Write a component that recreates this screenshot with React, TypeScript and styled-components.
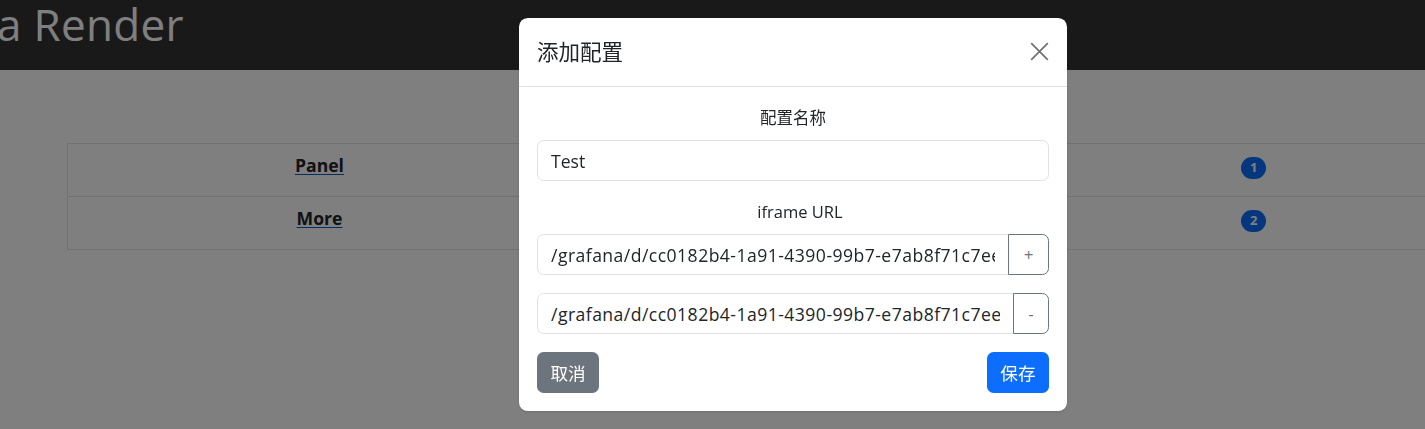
import React from "react"
import styled, { createGlobalStyle } from "styled-components"

const GlobalStyle = createGlobalStyle`
	html, body {
		margin: 0;
		padding: 0;
		background: #ffffff;
		overflow: hidden;
	}
	body {
		font-family: "Open Sans", "Noto Sans CJK SC", sans-serif;
		font-size: 17.6px;
		line-height: 1.5;
		color: #212529;
	}
	* {
		box-sizing: border-box;
	}
`

const Page = styled.div`
	width: 1425px;
	height: 429px;
	overflow: hidden;
`

const TopBar = styled.header`
	height: 70px;
	background: #333333;
	display: flex;
	align-items: flex-start;
	overflow: hidden;
`

const BrandTitle = styled.h1`
	margin: 0 0 0 -3px;
	font-size: 44px;
	font-weight: 400;
	line-height: 1.1;
	color: #ffffff;
	white-space: nowrap;
	letter-spacing: 0.3px;
`

const Content = styled.main`
	padding: 73px 0 0 67px;
`

const Table = styled.table`
	border-collapse: collapse;
	table-layout: fixed;
	width: 1438px;
`

const Cell = styled.td<{ $width: number }>`
	width: ${(p) => p.$width}px;
	height: 53px;
	border: 1px solid #dee2e6;
	border-right: none;
	text-align: center;
	vertical-align: top;
	padding: 8px 0 0;
`

const PanelLink = styled.a`
	font-weight: 700;
	color: #212529;
	text-decoration: underline;
	text-decoration-color: #0a58ca;
	text-underline-offset: 2px;
`

const Badge = styled.span`
	display: inline-flex;
	align-items: center;
	justify-content: center;
	min-width: 25px;
	height: 22px;
	margin-top: 2px;
	padding: 0 7px;
	border-radius: 12px;
	background: #0d6efd;
	color: #ffffff;
	font-size: 13px;
	font-weight: 700;
`

const Backdrop = styled.div`
	position: fixed;
	inset: 0;
	background: rgba(0, 0, 0, 0.5);
`

const Dialog = styled.div`
	position: fixed;
	left: 519px;
	top: 18px;
	width: 548px;
	background: #ffffff;
	border-radius: 8.8px;
	box-shadow: 0 1px 3px rgba(0, 0, 0, 0.15);
	display: flex;
	flex-direction: column;
`

const DialogHeader = styled.div`
	height: 69px;
	display: flex;
	align-items: center;
	justify-content: space-between;
	padding: 0 15px 0 18px;
	border-bottom: 1px solid #dee2e6;
`

const DialogTitle = styled.h5`
	margin: -2px 0 0;
	font-family: "Noto Sans CJK SC", sans-serif;
	font-size: 21.5px;
	font-weight: 400;
	color: #212529;
	line-height: 1.5;
`

const CloseButton = styled.button`
	width: 26px;
	height: 26px;
	padding: 0;
	border: none;
	background: transparent;
	display: flex;
	align-items: center;
	justify-content: center;
	opacity: 0.55;
	cursor: pointer;
	margin-top: -2px;
`

const DialogBody = styled.div`
	padding: 18px;
	display: flex;
	flex-direction: column;
`

const FieldLabel = styled.label<{ $gap?: number; $shift?: number }>`
	display: block;
	text-align: center;
	font-family: "Open Sans", "Noto Sans CJK SC", sans-serif;
	font-size: 16.5px;
	line-height: 26px;
	margin-top: ${(p) => p.$gap ?? 0}px;
	margin-bottom: 9px;
	padding-left: ${(p) => p.$shift ?? 0}px;
	color: #212529;
`

const TextInput = styled.input`
	display: block;
	width: 100%;
	height: 41px;
	padding: 0 13px;
	font-family: "Open Sans", sans-serif;
	font-size: 17.6px;
	color: #212529;
	border: 1px solid #dee2e6;
	border-radius: 6.6px;
	background: #ffffff;
	outline: none;
`

const InputGroup = styled.div`
	display: flex;
	height: 41px;
	margin-bottom: 18px;
`

const GroupInput = styled(TextInput)`
	flex: 1;
	min-width: 0;
	border-top-right-radius: 0;
	border-bottom-right-radius: 0;
	letter-spacing: 0.45px;
`

const GroupButton = styled.button<{ $width: number }>`
	width: ${(p) => p.$width}px;
	height: 41px;
	flex-shrink: 0;
	border: 1px solid #6c757d;
	border-radius: 0 6.6px 6.6px 0;
	background: #ffffff;
	color: #6c757d;
	font-family: "Open Sans", sans-serif;
	font-size: 17px;
	padding: 0;
	margin-left: -1px;
`

const Actions = styled.div`
	display: flex;
	justify-content: space-between;
`

const ActionButton = styled.button<{ $variant: "secondary" | "primary" }>`
	height: 41px;
	padding: 0 13.5px;
	border: none;
	border-radius: 6.6px;
	font-family: "Noto Sans CJK SC", sans-serif;
	font-size: 17.6px;
	color: #ffffff;
	background: ${(p) => (p.$variant === "primary" ? "#0d6efd" : "#6c757d")};
`

const rows = [
	{ name: "Panel", count: 1 },
	{ name: "More", count: 2 },
]

const url = "/grafana/d/cc0182b4-1a91-4390-99b7-e7ab8f71c7ee/new-dashboard?orgId=1"

export default function App() {
	return (
		<Page>
			<GlobalStyle />
			<TopBar>
				<BrandTitle>a Render</BrandTitle>
			</TopBar>
			<Content>
				<Table>
					<tbody>
						{rows.map((row) => (
							<tr key={row.name}>
								<Cell $width={504}>
									<PanelLink href="#">{row.name}</PanelLink>
								</Cell>
								<Cell $width={430}></Cell>
								<Cell $width={504}>
									<Badge>{row.count}</Badge>
								</Cell>
							</tr>
						))}
					</tbody>
				</Table>
			</Content>
			<Backdrop />
			<Dialog>
				<DialogHeader>
					<DialogTitle>添加配置</DialogTitle>
					<CloseButton aria-label="Close">
						<svg width="19" height="19" viewBox="0 0 16 16">
							<path d="M1 1 L15 15 M15 1 L1 15" stroke="#000" strokeWidth="1.5" fill="none" />
						</svg>
					</CloseButton>
				</DialogHeader>
				<DialogBody>
					<FieldLabel>配置名称</FieldLabel>
					<TextInput defaultValue="Test" />
					<FieldLabel $gap={18} $shift={14}>iframe URL</FieldLabel>
					<InputGroup>
						<GroupInput defaultValue={url} />
						<GroupButton $width={41}>+</GroupButton>
					</InputGroup>
					<InputGroup>
						<GroupInput defaultValue={url} />
						<GroupButton $width={36}>-</GroupButton>
					</InputGroup>
					<Actions>
						<ActionButton $variant="secondary">取消</ActionButton>
						<ActionButton $variant="primary">保存</ActionButton>
					</Actions>
				</DialogBody>
			</Dialog>
		</Page>
	)
}
